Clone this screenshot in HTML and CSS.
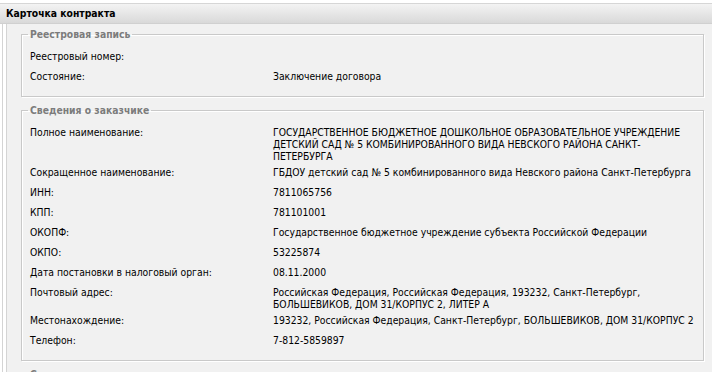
FILE: index.html
```html
<!DOCTYPE html>
<html lang="ru">
  <head>
    <meta charset="UTF-8" />
    <meta name="viewport" content="width=device-width, initial-scale=1.0" />
    <title>Карточка контракта</title>
    <link rel="stylesheet" href="styles.css">
  </head>
  <body>
    <div class="card">
      <!-- заголовок карточки -->
      <div class="card-header">Карточка контракта</div>

      <div class="card-body">
        <div class="card-inner">
          <!-- реестровая запись -->
          <fieldset class="group">
            <legend>Реестровая запись</legend>
            <div class="rows">
              <div class="label">Реестровый номер:</div>
              <div class="value"></div>
              <div class="label">Состояние:</div>
              <div class="value">Заключение договора</div>
            </div>
          </fieldset>

          <!-- сведения о заказчике -->
          <fieldset class="group">
            <legend>Сведения о заказчике</legend>
            <div class="rows">
              <div class="label">Полное наименование:</div>
              <div class="value">ГОСУДАРСТВЕННОЕ БЮДЖЕТНОЕ ДОШКОЛЬНОЕ ОБРАЗОВАТЕЛЬНОЕ УЧРЕЖДЕНИЕ ДЕТСКИЙ САД № 5 КОМБИНИРОВАННОГО ВИДА НЕВСКОГО РАЙОНА САНКТ-ПЕТЕРБУРГА</div>
              <div class="label">Сокращенное наименование:</div>
              <div class="value">ГБДОУ детский сад № 5 комбинированного вида Невского района Санкт-Петербурга</div>
              <div class="label">ИНН:</div>
              <div class="value">7811065756</div>
              <div class="label">КПП:</div>
              <div class="value">781101001</div>
              <div class="label">ОКОПФ:</div>
              <div class="value">Государственное бюджетное учреждение субъекта Российской Федерации</div>
              <div class="label">ОКПО:</div>
              <div class="value">53225874</div>
              <div class="label">Дата постановки в налоговый орган:</div>
              <div class="value">08.11.2000</div>
              <div class="label">Почтовый адрес:</div>
              <div class="value">Российская Федерация, Российская Федерация, 193232, Санкт-Петербург, БОЛЬШЕВИКОВ, ДОМ 31/КОРПУС 2, ЛИТЕР А</div>
              <div class="label">Местонахождение:</div>
              <div class="value">193232, Российская Федерация, Санкт-Петербург, БОЛЬШЕВИКОВ, ДОМ 31/КОРПУС 2</div>
              <div class="label">Телефон:</div>
              <div class="value">7-812-5859897</div>
            </div>
          </fieldset>

          <!-- сведения о контракте (дальше за краем) -->
          <fieldset class="group">
            <legend>Сведения о контракте</legend>
            <div class="rows">
              <div class="label">Номер контракта:</div>
              <div class="value"></div>
            </div>
          </fieldset>
        </div>
      </div>
    </div>
  </body>
</html>
```

FILE: styles.css
```css
body {
  margin: 0;
  padding: 0;
  background-color: #fff;
  font-family: "DejaVu Sans Condensed", "DejaVu Sans", Tahoma, sans-serif;
  font-size: 10.3px;
  line-height: 12px;
  color: #000;
  overflow: hidden;
}
.card {
  margin-top: 3px;
}
.card-header {
  height: 19px;
  padding-left: 6px;
  border-top: 1px solid #d6d6d6;
  border-bottom: 1px solid #d0d0d0;
  background: linear-gradient(#f3f3f3, #d9d9d9);
  font-weight: bold;
  line-height: 19px;
}
.card-body {
  margin-left: 2px;
  padding-left: 3px;
  border-left: 1px solid #d4d4d4;
  background-color: #fff;
}
.card-inner {
  border-left: 1px solid #d4d4d4;
  background-color: #f1f1f1;
  padding-top: 4px;
  padding-bottom: 20px;
}
.group {
  margin: 0 8px 7px 14px;
  padding: 8px 6px 8px 6px;
  border: 1px solid #c9c9c9;
  box-shadow: 1px 1px 0 #fff, inset 1px 1px 0 #fff;
}
.group legend {
  padding: 0 2px;
  color: #7c7c7c;
  font-weight: bold;
  line-height: 12px;
}
.rows {
  display: grid;
  grid-template-columns: 243px 1fr;
  padding-left: 2px;
}
.label,
.value {
  min-height: 16px;
  padding: 2px 0;
}
```
